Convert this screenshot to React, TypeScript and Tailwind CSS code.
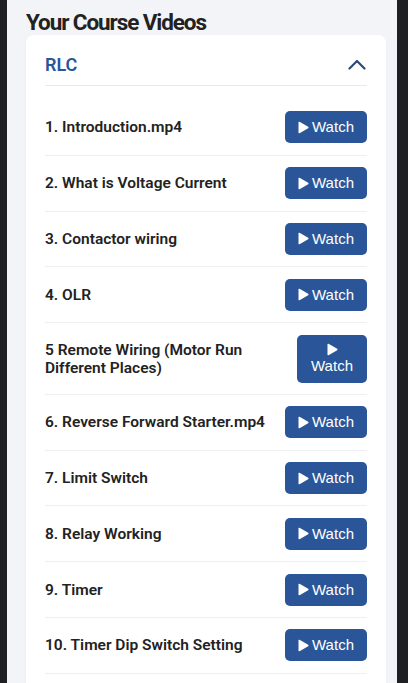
const videos = [
  "1. Introduction.mp4",
  "2. What is Voltage Current",
  "3. Contactor wiring",
  "4. OLR",
  "5 Remote Wiring (Motor Run Different Places)",
  "6. Reverse Forward Starter.mp4",
  "7. Limit Switch",
  "8. Relay Working",
  "9. Timer",
  "10. Timer Dip Switch Setting",
  "11. Star Delta Starter",
];

function PlayIcon() {
  return (
    <svg width="11" height="13" viewBox="0 0 11 13" className="shrink-0">
      <path d="M1.5 0.8 L10.2 5.7 Q11 6.5 10.2 7.3 L1.5 12.2 Q0.5 12.6 0.5 11.5 L0.5 1.5 Q0.5 0.4 1.5 0.8 Z" fill="white" />
    </svg>
  );
}

function WatchButton({ stacked }: { stacked?: boolean }) {
  return (
    <button
      className={`shrink-0 bg-[#2a5599] text-white rounded-[5px] font-['Liberation_Sans',Arial,sans-serif] text-[15px] leading-[18px] flex items-center justify-center ${
        stacked ? "flex-col w-[70px] h-[48px] gap-[1px]" : "w-[82px] h-[32px] gap-[3px]"
      }`}
    >
      <PlayIcon />
      <span>Watch</span>
    </button>
  );
}

export default function App() {
  return (
    <div className="w-[408px] h-[683px] overflow-hidden flex bg-[#1f2023] font-['Roboto',sans-serif]">
      <div className="w-[7px] shrink-0" />
      <div className="flex-1 bg-[#f3f4f7] pl-[19px] pr-[11px] flex flex-col">
        <h1 className="text-[22.5px] leading-[30px] font-bold tracking-[-1.1px] text-[#222] pt-[7px] -mb-[2px]">
          Your Course Videos
        </h1>
        <div className="bg-white rounded-[8px] shadow-[0_1px_3px_rgba(0,0,0,0.04)] px-[19px] flex-1">
          <div className="flex items-center justify-between h-[51px] pt-[8px] border-b border-[#e9eaec]">
            <span className="text-[18px] font-semibold text-[#2a5599]">RLC</span>
            <svg width="18" height="11" viewBox="0 0 18 11" className="mr-[1px]">
              <polyline points="1.5,9.5 9,2 16.5,9.5" fill="none" stroke="#2d4a75" strokeWidth="2.2" strokeLinecap="round" strokeLinejoin="round" />
            </svg>
          </div>
          <div className="pt-[14px]">
            {videos.map((v) => (
              <div
                key={v}
                className="flex items-center justify-between gap-[10px] border-b border-[#eeeff1] py-[11.4px]"
              >
                <span className="text-[15.5px] leading-[18px] font-semibold text-[#222]">{v}</span>
                <WatchButton stacked={v.startsWith("5 ")} />
              </div>
            ))}
          </div>
        </div>
      </div>
      <div className="w-[11px] shrink-0" />
    </div>
  );
}
